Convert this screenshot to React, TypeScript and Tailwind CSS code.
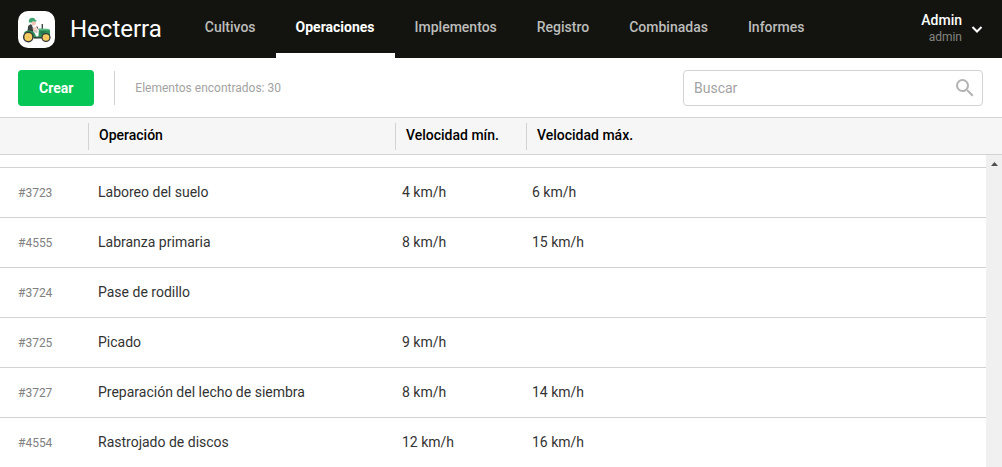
import { useState } from "react";

const TABS = ["Cultivos", "Operaciones", "Implementos", "Registro", "Combinadas", "Informes"];

type Operation = { id: number; name: string; min?: number; max?: number };

const OPERATIONS: Operation[] = [
  { id: 3723, name: "Laboreo del suelo", min: 4, max: 6 },
  { id: 4555, name: "Labranza primaria", min: 8, max: 15 },
  { id: 3724, name: "Pase de rodillo" },
  { id: 3725, name: "Picado", min: 9 },
  { id: 3727, name: "Preparación del lecho de siembra", min: 8, max: 14 },
  { id: 4554, name: "Rastrojado de discos", min: 12, max: 16 },
];

const speed = (value?: number) => (value === undefined ? "" : `${value} km/h`);

function Logo() {
  return (
    <svg viewBox="0 0 37 37" className="size-[37px] shrink-0" aria-hidden="true">
      <rect width="37" height="37" rx="10" fill="#fff" />
      {/* driver */}
      <path d="M13.400 10.400l4.300-.2.300 2.600-1.400 1.500-2.800-.3z" fill="#f0c4b4" />
      <path d="M10.700 11.200c-.3-2.700 1.200-4.500 3.600-4.500 1.700 0 2.800.9 3 2.200l1.400.6-.3.900-4.200.1-.8 1.300z" fill="#3fa56f" />
      <path d="M9.500 20.500l.6-5.600 2.300-1.700 1.900.8 1.500 3.200-.6 3.800z" fill="#39413f" />
      <path d="M13.600 13.800l1.800.5 1 3.300-1.400-.4z" fill="#e3e6e6" />
      <path d="M14.400 17.400l2.800-.9 1.500-2 .9.700-1.300 2.500-3.200 1.400z" fill="#f0c4b4" />
      <path d="M15.400 18.800l3.600-.6.800 3-1.200.8-3.400-1.200z" fill="#d8c6c2" />
      {/* tractor */}
      <path d="M20.300 18.600l-1.300-3" stroke="#414b46" strokeWidth=".9" />
      <path d="M24.300 18v-5" stroke="#414b46" strokeWidth="1.400" />
      <path d="M5.800 21.600c1.400-1.700 3-2.200 5-2.200 2.600 0 4.600.8 5.800 2.600l1.600 3.500 2.200-.3.600-7.400 9 .1c1.300.2 2 .9 2 2.400v3.900l-1.800 1.600-12.200 1.400-6-.4-3-4z" fill="#2f8f58" />
      <path d="M21.300 17.800h8.500c1.200.1 1.800.7 2 1.500H21.200z" fill="#5cbf83" />
      <path d="M22.500 20.900h5.500M22.500 22.300h4" stroke="#226043" strokeWidth=".7" />
      <path d="M16 26.800h8" stroke="#38443b" strokeWidth="1.500" />
      <circle cx="10.300" cy="26" r="5.400" fill="#363c38" />
      <circle cx="10.300" cy="26" r="3.900" fill="#f7cc63" />
      <circle cx="10.300" cy="26" r=".8" fill="#e2ad4c" />
      <circle cx="28" cy="26.500" r="4.600" fill="#363c38" />
      <circle cx="28" cy="26.500" r="3.300" fill="#f7cc63" />
      <circle cx="28" cy="26.500" r=".7" fill="#e2ad4c" />
    </svg>
  );
}

function Header({ selected, onSelect }: { selected: string; onSelect: (tab: string) => void }) {
  return (
    <header className="flex h-[58px] shrink-0 items-center bg-[#13140f] px-[18px]">
      <Logo />
      <span className="pl-[15px] pr-[23px] text-2xl text-white">Hecterra</span>

      <nav className="flex flex-1 self-stretch">
        {TABS.map((tab) => (
          <button
            key={tab}
            onClick={() => onSelect(tab)}
            className={`border-b-[5px] px-5 text-sm
              ${tab === selected ? "border-white font-bold text-white" : "border-transparent font-medium text-[#bdbdbb]"}`}
          >
            {tab}
          </button>
        ))}
      </nav>

      <button className="flex items-center gap-2 text-right">
        <span>
          <span className="block text-sm font-medium leading-4 text-white">Admin</span>
          <span className="block text-xs leading-[18px] text-[#858582]">admin</span>
        </span>
        <svg viewBox="0 0 14 14" className="size-3.5" fill="none" stroke="#fff" strokeWidth="2" aria-hidden="true">
          <path d="M2.500 5l4.500 4.500L11.500 5" />
        </svg>
      </button>
    </header>
  );
}

function Toolbar() {
  return (
    <div className="flex h-[59px] shrink-0 items-center pl-[18px] pr-[19px]">
      <button className="h-9 rounded bg-[#06c755] px-[21px] text-sm font-bold text-white">Crear</button>
      <div className="ml-5 h-[34px] border-l border-[#d3d3d3]" />
      <span className="flex-1 pl-5 text-xs text-[#a3a3a3]">Elementos encontrados: 30</span>

      <label className="flex h-9 w-[300px] items-center rounded border border-[#d3d3d3] pl-2.5 pr-[5px]">
        <input
          type="search"
          placeholder="Buscar"
          aria-label="Buscar"
          className="min-w-0 flex-1 text-sm outline-none placeholder:text-[#a3a3a3]"
        />
        <svg viewBox="0 0 24 24" className="size-6" fill="#b3b3b3" aria-hidden="true">
          <path d="M15.500 14h-.79l-.28-.27A6.471 6.471 0 0 0 16 9.500 6.500 6.500 0 1 0 9.500 16c1.610 0 3.090-.59 4.230-1.570l.27.28v.79l5 4.990L20.490 19l-4.990-5zm-6 0C7.010 14 5 11.990 5 9.500S7.010 5 9.500 5 14 7.010 14 9.500 11.990 14 9.500 14z" />
        </svg>
      </label>
    </div>
  );
}

function HeadCell({ label }: { label: string }) {
  return (
    <th className="p-0 text-left font-medium">
      <div className="flex h-[27px] items-center border-l border-[#d3d3d3] pb-0.5 pl-2.5">{label}</div>
    </th>
  );
}

export default function App() {
  const [tab, setTab] = useState("Operaciones");

  return (
    <div className="flex h-screen flex-col overflow-hidden bg-white font-['Roboto',sans-serif]">
      <Header selected={tab} onSelect={setTab} />
      <Toolbar />

      <div className="shrink-0 border-y border-[#d3d3d3] bg-[#f6f6f6]">
        <table className="w-full table-fixed text-sm text-black">
          <colgroup>
            <col className="w-[88px]" />
            <col className="w-[307px]" />
            <col className="w-[131px]" />
            <col />
          </colgroup>
          <thead>
            <tr className="h-9">
              <td />
              <HeadCell label="Operación" />
              <HeadCell label="Velocidad mín." />
              <HeadCell label="Velocidad máx." />
            </tr>
          </thead>
        </table>
      </div>

      <div className="flex min-h-0 flex-1">
        <div className="min-w-0 flex-1 overflow-hidden pt-3">
          <table className="w-full table-fixed text-sm text-[#333]">
            <colgroup>
              <col className="w-[88px]" />
              <col className="w-[304px]" />
              <col className="w-[130px]" />
              <col />
            </colgroup>
            <tbody>
              {OPERATIONS.map((op) => (
                <tr key={op.id} className="h-[50px] border-t border-[#d3d3d3]">
                  <td className="pl-[18px] text-xs text-[#808080]">#{op.id}</td>
                  <td className="pb-0.5 pl-2.5">{op.name}</td>
                  <td className="pb-0.5 pl-2.5">{speed(op.min)}</td>
                  <td className="pb-0.5 pl-2.5">{speed(op.max)}</td>
                </tr>
              ))}
            </tbody>
          </table>
        </div>

        {/* scrollbar track */}
        <div className="flex w-4 shrink-0 justify-center bg-[#f0f0f0] pt-[7px]" aria-hidden="true">
          <svg viewBox="0 0 7 4" className="h-1 w-[7px]" fill="#505050">
            <path d="M3.500 0L7 4H0z" />
          </svg>
        </div>
      </div>
    </div>
  );
}
